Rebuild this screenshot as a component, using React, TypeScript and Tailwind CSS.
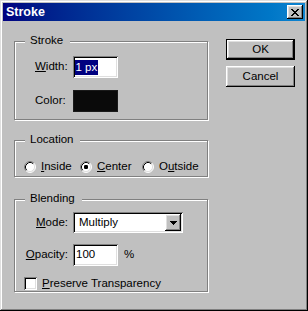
import React from "react";

const font = { fontFamily: '"Liberation Sans", Arial, sans-serif' };

const raisedBtn =
  "shadow-[inset_-1px_-1px_#000,inset_1px_1px_#fff,inset_-2px_-2px_#808080,inset_2px_2px_#dfdfdf]";
const sunken =
  "shadow-[inset_1px_1px_#808080,inset_-1px_-1px_#fff,inset_2px_2px_#000,inset_-2px_-2px_#dfdfdf]";

function U({ children }: { children: React.ReactNode }) {
  return <span className="underline underline-offset-[1px] decoration-1">{children}</span>;
}

function Group({
  title,
  className,
  children,
}: {
  title: string;
  className: string;
  children: React.ReactNode;
}) {
  return (
    <div
      className={`relative w-[194px] border border-[#808080] shadow-[inset_1px_1px_#fff,1px_1px_#fff] ${className}`}
    >
      <div className="absolute left-[10px] top-[-8px] bg-[#c0c0c0] pl-[5px] pr-[7px] leading-[13px]">
        {title}
      </div>
      {children}
    </div>
  );
}

function Radio({ checked }: { checked?: boolean }) {
  return (
    <svg width="12" height="12" viewBox="0 0 12 12" className="shrink-0">
      <circle cx="6" cy="6" r="5" fill="#fff" />
      <path d="M9.89 2.11 A5.5 5.5 0 0 0 2.11 9.89" stroke="#808080" fill="none" />
      <path d="M2.11 9.89 A5.5 5.5 0 0 0 9.89 2.11" stroke="#fff" fill="none" />
      <path d="M9.18 2.82 A4.5 4.5 0 0 0 2.82 9.18" stroke="#000" fill="none" />
      <path d="M2.82 9.18 A4.5 4.5 0 0 0 9.18 2.82" stroke="#dfdfdf" fill="none" />
      {checked && <rect x="4" y="4" width="4" height="4" rx="1.2" fill="#000" />}
    </svg>
  );
}

function CloseGlyph() {
  const rows = [
    "XX....XX",
    ".XX..XX.",
    "..XXXX..",
    "...XX...",
    "..XXXX..",
    ".XX..XX.",
    "XX....XX",
  ];
  return (
    <svg width="8" height="7" viewBox="0 0 8 7" shapeRendering="crispEdges">
      {rows.map((r, y) =>
        r.split("").map((c, x) =>
          c === "X" ? <rect key={`${x}-${y}`} x={x} y={y} width="1" height="1" fill="#000" /> : null
        )
      )}
    </svg>
  );
}

export default function App() {
  return (
    <div
      style={font}
      className="w-[308px] h-[311px] bg-[#c0c0c0] p-[3px] text-[11.5px] text-black shadow-[inset_-1px_-1px_#000,inset_1px_1px_#dfdfdf,inset_-2px_-2px_#808080,inset_2px_2px_#fff] flex flex-col"
    >
      {/* Title bar */}
      <div className="h-[18px] shrink-0 flex items-center justify-between bg-gradient-to-r from-[#000080] to-[#1084d0] pl-[3px] pr-[2px]">
        <span className="text-white font-bold text-[12.5px] leading-none">Stroke</span>
        <div className={`w-[16px] h-[14px] bg-[#c0c0c0] flex items-center justify-center ${raisedBtn}`}>
          <CloseGlyph />
        </div>
      </div>

      {/* Content */}
      <div className="flex pl-[11px]">
        {/* Left column */}
        <div className="flex flex-col w-[195px] pt-[20px]">
          <Group title="Stroke" className="h-[79px] pt-[14px]">
            <div className="flex items-center h-[22px]">
              <div className="w-[58px] pl-[20px]">
                <U>W</U>idth:
              </div>
              <div className={`w-[45px] h-[22px] bg-white flex items-center pl-[2px] ${sunken}`}>
                <span className="bg-[#000080] text-white h-[15px] leading-[15px] px-[0.5px]">1 px</span>
              </div>
            </div>
            <div className="flex items-center h-[22px] mt-[12px]">
              <div className="w-[58px] pl-[20px]">Color:</div>
              <div className="w-[45px] h-[22px] bg-[#0a0a0a] border border-[#1a1a1a]" />
            </div>
          </Group>

          <Group title="Location" className="h-[37px] mt-[20px] pt-[19px]">
            <div className="flex items-center h-[13px] pl-[9px]">
              <div className="w-[56px] flex items-center gap-[5px]">
                <Radio />
                <span>
                  <U>I</U>nside
                </span>
              </div>
              <div className="w-[62px] flex items-center gap-[5px]">
                <Radio checked />
                <span>
                  <U>C</U>enter
                </span>
              </div>
              <div className="flex items-center gap-[5px]">
                <Radio />
                <span>
                  O<U>u</U>tside
                </span>
              </div>
            </div>
          </Group>

          <Group title="Blending" className="h-[93px] mt-[22px] pt-[12px]">
            <div className="flex items-center h-[21px]">
              <div className="w-[58px] pr-[5px] text-right">
                <U>M</U>ode:
              </div>
              <div className={`w-[110px] h-[21px] bg-white flex items-center justify-between pl-[6px] pr-[2px] ${sunken}`}>
                <span>Multiply</span>
                <div className={`w-[16px] h-[17px] bg-[#c0c0c0] flex items-center justify-center ${raisedBtn}`}>
                  <svg width="7" height="4" viewBox="0 0 7 4" shapeRendering="crispEdges">
                    <path d="M0 0H7L3.5 4Z" fill="#000" />
                  </svg>
                </div>
              </div>
            </div>
            <div className="flex items-center h-[22px] mt-[11px]">
              <div className="w-[58px] pr-[5px] text-right">
                <U>O</U>pacity:
              </div>
              <div className={`w-[45px] h-[22px] bg-white flex items-center pl-[3px] ${sunken}`}>100</div>
              <span className="ml-[6px]">%</span>
            </div>
            <div className="flex items-center h-[13px] mt-[11px] pl-[9px] gap-[5px]">
              <div className={`w-[13px] h-[13px] bg-white ${sunken}`} />
              <span>
                <U>P</U>reserve Transparency
              </span>
            </div>
          </Group>
        </div>

        {/* Right column */}
        <div className="flex flex-col ml-[17px] pt-[18px] gap-[6px]">
          <div className="w-[69px] h-[21px] border border-black">
            <div className={`w-full h-full bg-[#c0c0c0] flex items-center justify-center ${raisedBtn}`}>OK</div>
          </div>
          <div className={`w-[69px] h-[21px] bg-[#c0c0c0] flex items-center justify-center ${raisedBtn}`}>
            Cancel
          </div>
        </div>
      </div>
    </div>
  );
}
